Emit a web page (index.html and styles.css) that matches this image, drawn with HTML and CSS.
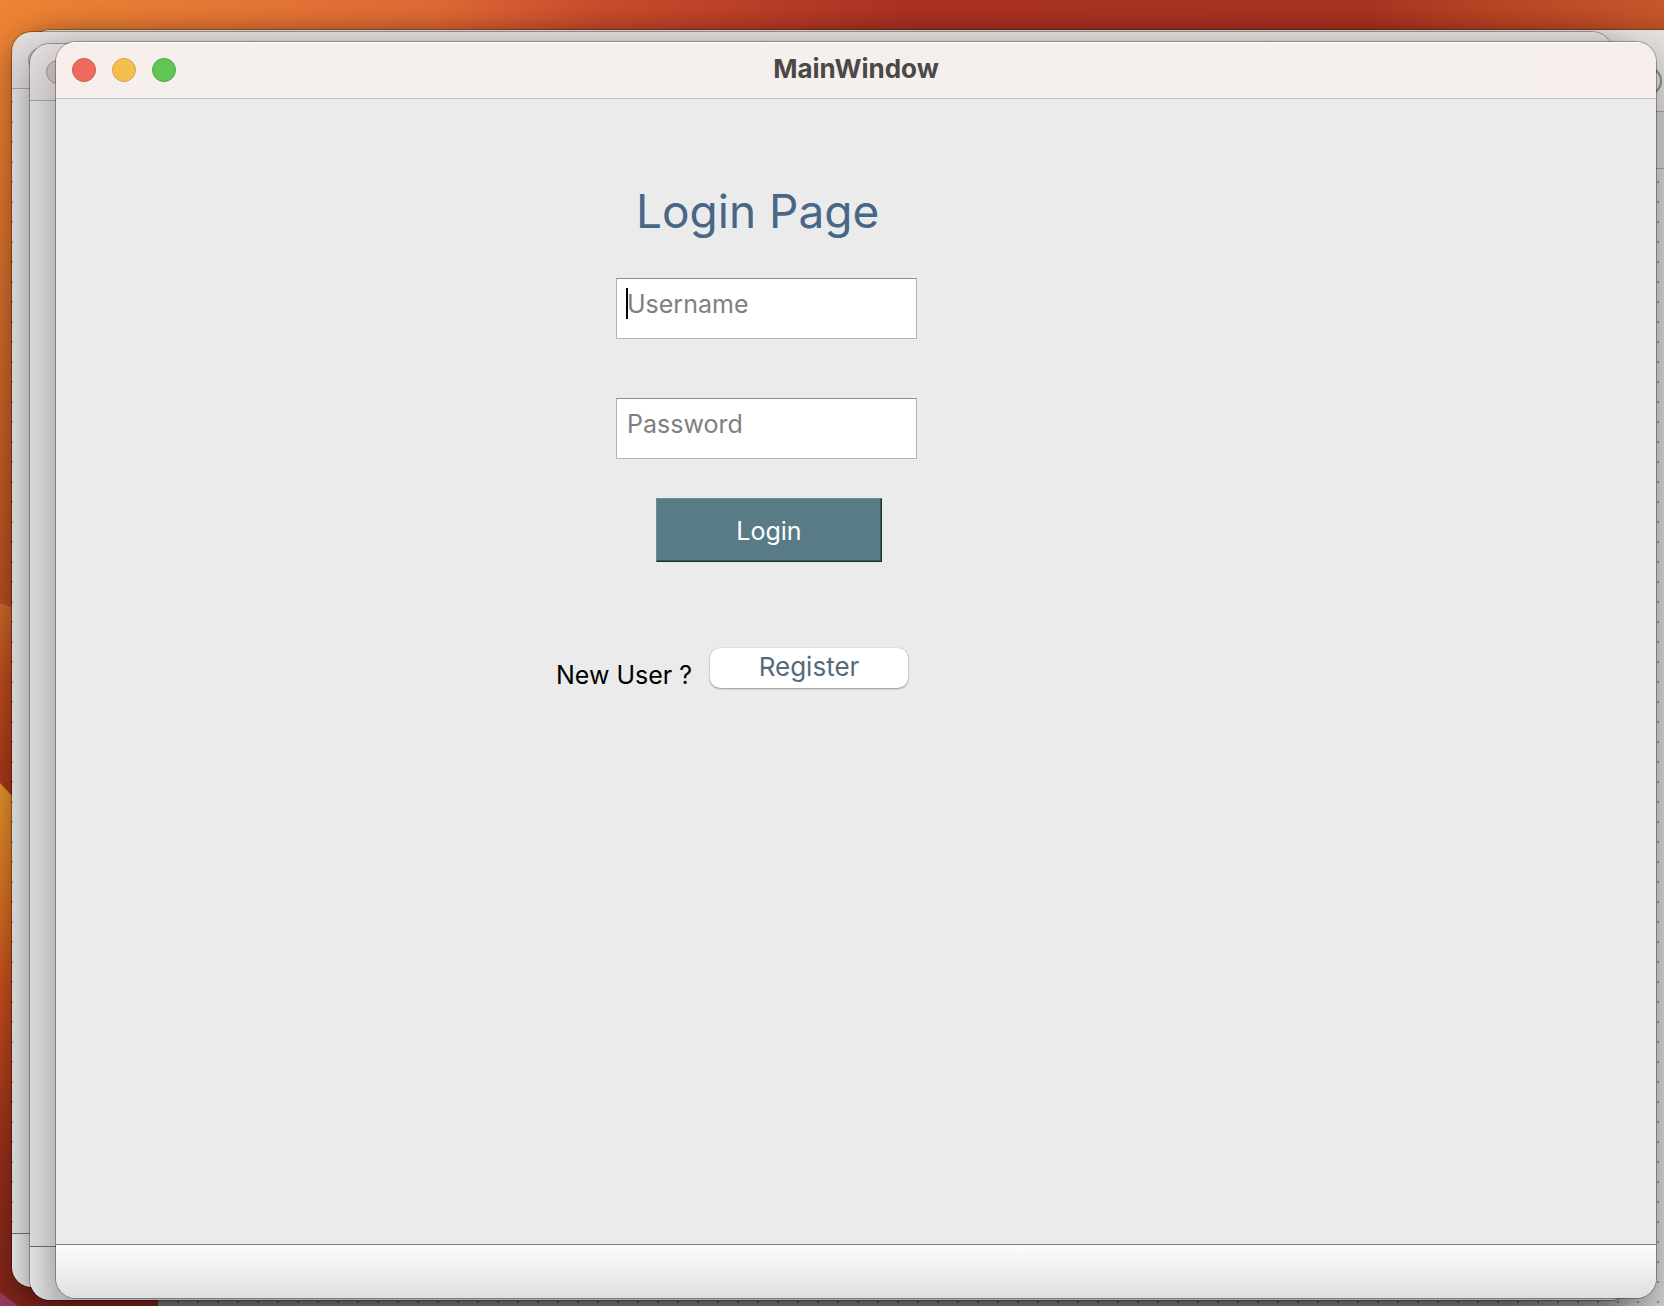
FILE: index.html
```html
<!DOCTYPE html>
<html lang="en">
<head>
<meta charset="utf-8">
<title>MainWindow</title>
<link rel="stylesheet" href="styles.css">
</head>
<body>
<div class="desktop">
  <svg class="wallpaper" viewBox="0 0 1664 1306" preserveAspectRatio="none" aria-hidden="true">
    <defs>
      <linearGradient id="sky" x1="0" x2="1" y1="0" y2="0">
        <stop offset="0" stop-color="#ed8434"/>
        <stop offset=".16" stop-color="#e67536"/>
        <stop offset=".26" stop-color="#e06a35"/>
        <stop offset=".36" stop-color="#cb4c2d"/>
        <stop offset=".54" stop-color="#ad3323"/>
        <stop offset=".82" stop-color="#ab3321"/>
        <stop offset=".9" stop-color="#bb4525"/>
        <stop offset="1" stop-color="#c8582c"/>
      </linearGradient>
      <linearGradient id="side" x1="0" x2="0" y1="0" y2="1">
        <stop offset="0" stop-color="#ed8434"/>
        <stop offset=".5" stop-color="#d0682a"/>
        <stop offset="1" stop-color="#b34a1e"/>
      </linearGradient>
      <linearGradient id="dune" x1="0" x2="0" y1="0" y2="1">
        <stop offset="0" stop-color="#cd6a2c"/>
        <stop offset=".3" stop-color="#be4e1f"/>
        <stop offset="1" stop-color="#a02c17"/>
      </linearGradient>
      <linearGradient id="ember" x1="0" x2="0" y1="0" y2="1">
        <stop offset="0" stop-color="#e6932c"/>
        <stop offset=".2" stop-color="#d97424"/>
        <stop offset=".4" stop-color="#c44e1d"/>
        <stop offset=".7" stop-color="#9a301b"/>
        <stop offset="1" stop-color="#7c241b"/>
      </linearGradient>
    </defs>
    <rect width="1664" height="1306" fill="url(#sky)"/>
    <rect y="30" width="30" height="600" fill="url(#side)"/>
    <path d="M0 603L30 614V830H0Z" fill="url(#dune)"/>
    <path d="M0 783L30 815V1306H0Z" fill="url(#ember)"/>
    <path d="M12 1260H200V1306H12Z" fill="#7c241b"/>
    <path d="M0 1292L18 1306H0Z" fill="#96385a"/>
  </svg>

  <div class="window window-tools" aria-hidden="true">
    <div class="toolbar"><span class="ring"></span></div>
    <div class="subbar"></div>
  </div>
  <div class="grid-pane" aria-hidden="true"></div>

  <div class="window window-back window-first" aria-hidden="true">
    <div class="titlebar"><span class="light"></span></div>
    <div class="content"></div>
    <div class="statusbar"></div>
  </div>
  <div class="window window-back window-second" aria-hidden="true">
    <div class="titlebar"><span class="light"></span></div>
    <div class="content"></div>
    <div class="statusbar"></div>
  </div>

  <main class="window window-main">
    <header class="titlebar">
      <div class="lights">
        <button class="light light-close" type="button" aria-label="Close"></button>
        <button class="light light-min" type="button" aria-label="Minimize"></button>
        <button class="light light-zoom" type="button" aria-label="Zoom"></button>
      </div>
      <h1 class="window-title">MainWindow</h1>
      <div class="titlebar-end"></div>
    </header>
    <div class="content">
      <form class="login">
        <h2 class="heading">Login Page</h2>
        <div class="field">
          <input class="input" type="text" placeholder="Username" aria-label="Username">
          <span class="caret"></span>
        </div>
        <div class="field">
          <input class="input" type="password" placeholder="Password" aria-label="Password">
        </div>
        <button class="submit" type="submit">Login</button>
        <div class="signup">
          <span class="signup-text">New User ?</span>
          <button class="register" type="button">Register</button>
        </div>
      </form>
    </div>
    <footer class="statusbar"></footer>
  </main>
</div>
</body>
</html>
```
FILE: styles.css
```css
* { box-sizing: border-box; }

body {
  margin: 0;
  font-family: Inter, "Liberation Sans", sans-serif;
  font-size: 25px;
  line-height: 30px;
}

.desktop {
  position: relative;
  height: 100vh;
  min-height: 800px;
  overflow: hidden;
}

.wallpaper {
  position: absolute;
  inset: 0;
  width: 100%;
  height: 100%;
}

.window {
  position: absolute;
  display: flex;
  flex-direction: column;
  border-radius: 20px;
  overflow: hidden;
}

.titlebar {
  flex: none;
  display: flex;
  align-items: center;
  height: 57px;
  padding: 0 16px;
  border-bottom: 1px solid #c3bfbe;
}

.content { flex: 1; }

.statusbar {
  flex: none;
  height: 54px;
  border-top: 1px solid #7e7e7e;
  background: linear-gradient(#fcfcfc, #dfdfdf);
}

.light {
  flex: none;
  width: 24px;
  height: 24px;
  padding: 0;
  border: 1px solid #999594;
  border-radius: 50%;
  background: #c5c0bf;
}

/* Inactive windows */
.window-tools {
  inset: 30px -200px 60px 30px;
  background: #c3c3c3;
  box-shadow: 0 0 0 1px rgba(0, 0, 0, .25), 0 10px 40px rgba(0, 0, 0, .4);
}

.toolbar {
  display: flex;
  align-items: center;
  justify-content: flex-end;
  height: 82px;
  padding: 20px 202px 0 0;
  border-bottom: 1px solid #9b9897;
  background: linear-gradient(#e4e0dd, #d3cfcd);
}

.ring {
  width: 28px;
  height: 28px;
  border: 2px solid #858281;
  border-radius: 50%;
}

.subbar {
  height: 57px;
  border-bottom: 1px solid #979595;
  background: #c8c4c3;
}

.grid-pane {
  position: absolute;
  inset: 169px 0 0 158px;
  background:
    conic-gradient(from 270deg at 2px 2px, #00000050 90deg, transparent 0) 19px 12px / 20px 20px,
    linear-gradient(90deg, #7c7c7c, #848484 90%, #a2a2a2 96%, #cacaca);
}

.window-back {
  box-shadow: 0 0 0 1px rgba(0, 0, 0, .3), 0 8px 28px rgba(0, 0, 0, .25);
}

.window-back .titlebar {
  background: linear-gradient(#e2dddc, #d6d1d0);
  border-color: #a19f9e;
}

.window-back .content {
  background: linear-gradient(90deg, #dadada, #cecece 26px);
}

.window-back .statusbar {
  border-color: #696969;
  background: linear-gradient(90deg, #e2e2e2, #c8c8c8 26px);
}

.window-first { inset: 32px 52px 19px 12px; }
.window-second { inset: 44px 34px 6px 30px; }

.window-first .content {
  background:
    conic-gradient(from 270deg at 1px 2px, #00000040 90deg, transparent 0) 0 12px / 1600px 20px,
    linear-gradient(90deg, #dadada, #d0d0d0 18px);
}

/* Active window */
.window-main {
  inset: 42px 8px 8px 56px;
  background: #ebebeb;
  box-shadow: 0 0 0 1px rgba(0, 0, 0, .3), 0 8px 32px rgba(0, 0, 0, .2);
}

.window-main .titlebar {
  background: linear-gradient(90deg, #f7eeec, #f5f0ed 10%, #f5f0ed 88%, #f7eeec);
  box-shadow: inset 0 1px #fff;
}

.lights,
.titlebar-end { flex: 1; }

.lights {
  display: flex;
  gap: 16px;
}

.light-close { background: #ed6a5e; border-color: #d55549; }
.light-min { background: #f5bf4f; border-color: #d8a140; }
.light-zoom { background: #61c554; border-color: #4fa73f; }

.window-title {
  margin: 0;
  padding-bottom: 2px;
  font-size: 26px;
  font-weight: 700;
  line-height: 30px;
  color: #4a4947;
}

.login {
  display: flex;
  flex-direction: column;
  width: 352px;
  margin-left: 500px;
  padding-top: 82px;
}

.heading {
  margin: 0 0 37px 80px;
  font-size: 46px;
  font-weight: 400;
  line-height: 60px;
  color: #486786;
  white-space: nowrap;
}

.field {
  position: relative;
  width: 301px;
  height: 61px;
  margin: 0 0 59px 60px;
}

.field + .submit { margin-top: -20px; }

.input {
  display: block;
  width: 100%;
  height: 100%;
  padding: 0 10px;
  padding-bottom: 10px;
  border: 1px solid #b4b4b4;
  border-top-color: #8c8c8c;
  border-radius: 0;
  outline: 0;
  background: #fff;
  color: #000;
  font: inherit;
}

.input::placeholder { color: #808080; opacity: 1; }

.caret {
  position: absolute;
  top: 10px;
  left: 10px;
  width: 2px;
  height: 31px;
  background: #000;
}

.submit {
  width: 226px;
  height: 64px;
  margin: 0 0 86px 100px;
  padding: 2px 0 0;
  border: 1px solid;
  border-color: #5f8f9e #1d2c31 #1d2c31 #5f8f9e;
  box-shadow: inset -1px -1px #3d565d;
  background: #587b86;
  color: #fff;
  font: inherit;
}

.signup {
  display: flex;
  justify-content: space-between;
}

.signup-text {
  padding-top: 12px;
  color: #000;
  white-space: nowrap;
}

.register {
  width: 198px;
  height: 40px;
  padding: 0 0 2px;
  border: 0;
  border-radius: 10px;
  background: #fff;
  box-shadow: 0 0 1px rgba(0, 0, 0, .3), 0 1px 2px rgba(0, 0, 0, .35);
  color: #566b7c;
  font: inherit;
  font-size: 26px;
}
```
